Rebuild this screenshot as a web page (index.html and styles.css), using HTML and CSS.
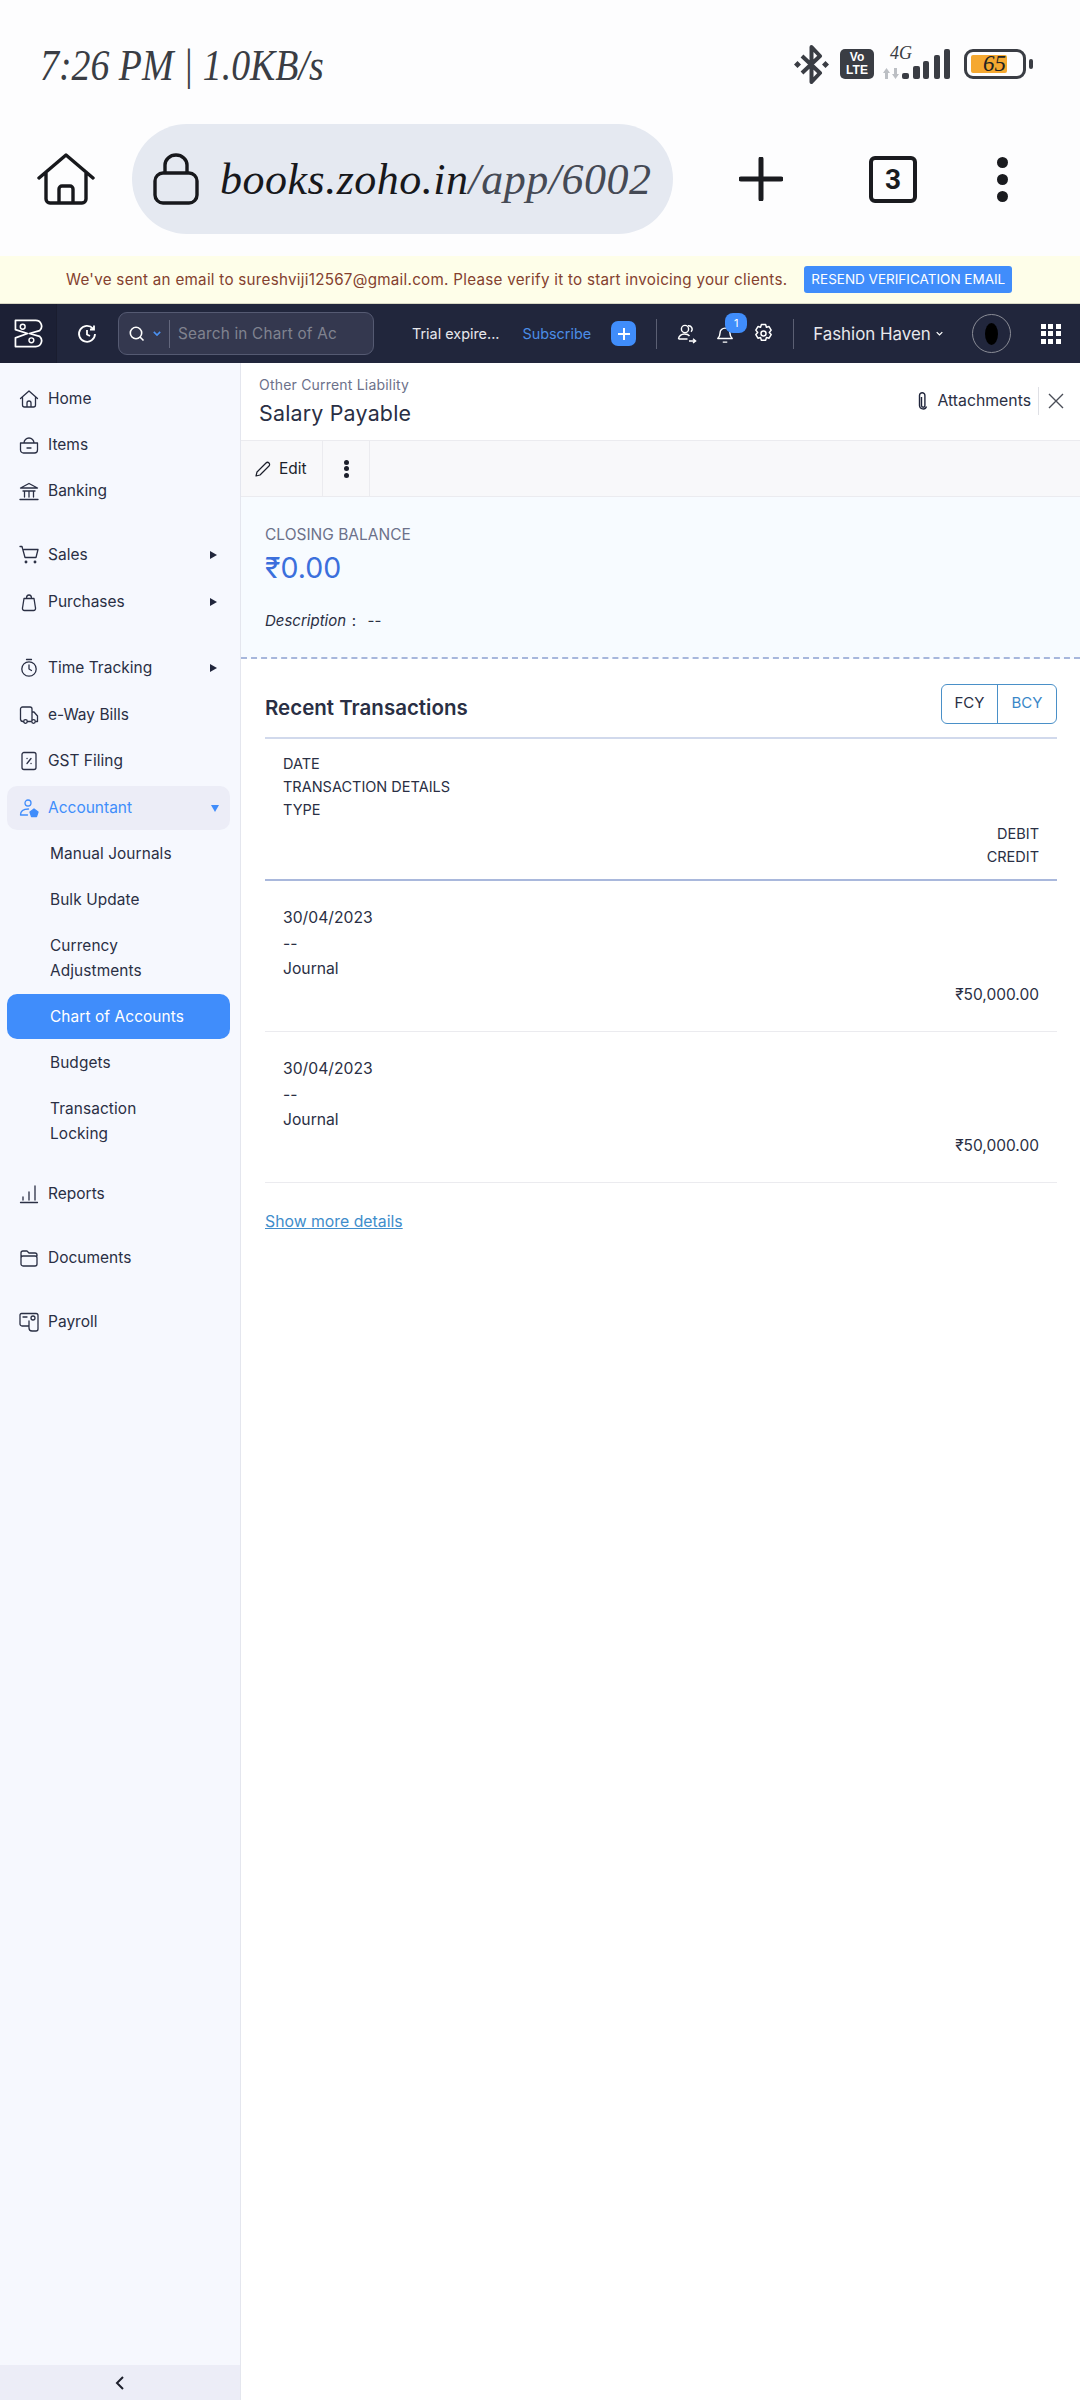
FILE: index.html
```html
<!DOCTYPE html>
<html lang="en">
<head>
<meta charset="utf-8">
<title>Salary Payable</title>
<link rel="stylesheet" href="styles.css">
</head>
<body>
<div class="phone">
  <div class="status">
    <span class="clock">7:26 PM | 1.0KB/s</span>
    <div class="status-icons">
      <svg class="bt" viewBox="0 0 35 39" width="35" height="39"><path d="M8 11l18 17-8.500 9V2L26 11 8 28" fill="none" stroke="#3a3d44" stroke-width="4" stroke-linejoin="round"/><path d="M3.500 16l3.500 3.500L3.500 23 0 19.500zM31.500 16l3.500 3.500-3.500 3.500-3.500-3.500z" fill="#3a3d44"/></svg>
      <span class="volte">Vo<br>LTE</span>
      <div class="signal">
        <span class="net">4G</span>
        <svg viewBox="0 0 67 32" width="67" height="32"><path d="M3.500 20l3.500 5H5v6H2v-6H0zM12.500 31l3.500-5h-2v-6h-3v6H9z" fill="#bcbfc4"/><g fill="#3a3d44"><rect x="19" y="25" width="7" height="6" rx="2"/><rect x="30" y="18" width="7" height="13" rx="2"/><rect x="40" y="13" width="6" height="18" rx="2"/><rect x="51" y="7" width="6" height="24" rx="2"/><rect x="61" y="1" width="6" height="30" rx="2"/></g></svg>
      </div>
      <div class="battery"><div class="batt-body"><i class="batt-fill"></i><span class="batt-num">65</span></div><i class="batt-tip"></i></div>
    </div>
  </div>
  <div class="browser">
    <svg class="home" viewBox="0 0 58 52" width="58" height="52"><path d="M2 25L29 2l27 23M9 19v27a4 4 0 0 0 4 4h32a4 4 0 0 0 4-4V19M22 50V36a3 3 0 0 1 3-3h8a3 3 0 0 1 3 3v14" fill="none" stroke="#17181c" stroke-width="3.400" stroke-linejoin="round" stroke-linecap="round"/></svg>
    <div class="urlbar">
      <svg viewBox="0 0 46 52" width="46" height="52"><path d="M12 20v-8a11 10 0 0 1 22 0v8" fill="none" stroke="#17181c" stroke-width="3.400"/><rect x="2" y="20" width="42" height="30" rx="8" fill="none" stroke="#17181c" stroke-width="3.400"/></svg>
      <span class="url"><b>books.zoho.in</b>/app/6002</span>
    </div>
    <svg class="plus" viewBox="0 0 44 44" width="44" height="44"><path d="M22 2v40M2 22h40" stroke="#1a1b1f" stroke-width="5" stroke-linecap="round"/></svg>
    <span class="tabs">3</span>
    <span class="dots"><i></i><i></i><i></i></span>
  </div>
  <div class="notice">
    <span class="notice-text">We've sent an email to sureshviji12567@gmail.com. Please verify it to start invoicing your clients.</span>
    <span class="resend">RESEND VERIFICATION EMAIL</span>
  </div>
  <header class="nav">
    <div class="logo"><svg viewBox="0 0 30 30" width="29" height="29"><path d="M1.500 1.500h21a6 6 0 0 1 4 10.500L16 15l10.500 3a6 6 0 0 1-4 10.500h-21v-9L14 15 1.500 11z" fill="none" stroke="#fff" stroke-width="1.800" stroke-linejoin="round"/><circle cx="9" cy="8" r="2.500" fill="none" stroke="#fff" stroke-width="1.500"/><circle cx="18" cy="22" r="2.500" fill="none" stroke="#fff" stroke-width="1.500"/></svg></div>
    <svg class="recent" viewBox="0 0 20 20" width="20" height="20"><path d="M16 4.500A8 8 0 1 0 18 10M17 1.500v4h-4M10 6v4.500l3 1.500" fill="none" stroke="#fff" stroke-width="1.800"/></svg>
    <div class="search">
      <svg viewBox="0 0 16 16" width="16" height="16"><circle cx="7" cy="7" r="5.700" fill="none" stroke="#fff" stroke-width="1.600"/><path d="M11 11l3.500 3.500" stroke="#fff" stroke-width="1.600"/></svg>
      <svg viewBox="0 0 10 6" width="8" height="5"><path d="M1 1l4 4 4-4" fill="none" stroke="#4a90f0" stroke-width="2"/></svg>
      <span class="search-sep"></span>
      <span class="search-text">Search in Chart of Ac</span>
    </div>
    <span class="trial">Trial expire...</span>
    <span class="subscribe">Subscribe</span>
    <span class="add"><svg viewBox="0 0 12 12" width="12" height="12"><path d="M6 0v12M0 6h12" stroke="#fff" stroke-width="2"/></svg></span>
    <span class="nav-sep"></span>
    <svg class="nav-i1" viewBox="0 0 20 20" width="20" height="20"><circle cx="8" cy="5" r="3.600" fill="none" stroke="#fff" stroke-width="1.400"/><path d="M11 1.800a3.500 3.500 0 0 1 3 6M1.500 15c0-3 3-5 6-5 2 0 4 .6 5 2M1.500 15h9M12 17h6.500M16 14.800l2.600 2.200-2.600 2" fill="none" stroke="#fff" stroke-width="1.400"/></svg>
    <div class="bell">
      <svg viewBox="0 0 20 22" width="18" height="20"><path d="M2 16c2-2 2.500-4 2.500-6a5.500 5.500 0 0 1 11 0c0 2 .5 4 2.500 6zM7.500 20h5" fill="none" stroke="#fff" stroke-width="1.600" stroke-linejoin="round"/></svg>
      <span class="badge">1</span>
    </div>
    <svg class="gear" viewBox="0 0 20 20" width="21" height="21"><path d="M8 1.500h4l.8 2.600 2.500-.7 2 3.400-1.800 2.200 1.800 2-2 3.500-2.500-.7-.8 2.700H8l-.8-2.700-2.500.7-2-3.500 1.800-2-1.800-2.200 2-3.400 2.500.7z" fill="none" stroke="#fff" stroke-width="1.400" stroke-linejoin="round"/><circle cx="10" cy="10" r="2.400" fill="none" stroke="#fff" stroke-width="1.400"/></svg>
    <span class="nav-sep sep-org"></span>
    <span class="org">Fashion Haven</span>
    <svg class="org-chev" viewBox="0 0 10 6" width="7" height="5"><path d="M1 1l4 4 4-4" fill="none" stroke="#fff" stroke-width="1.800"/></svg>
    <span class="avatar"><i></i></span>
    <span class="apps"><i></i><i></i><i></i><i></i><i></i><i></i><i></i><i></i><i></i></span>
  </header>
  <div class="main">
    <aside class="side">
      <nav class="menu">
        <a class="item"><svg viewBox="0 0 20 20"><path d="M1.500 9.500L10 2l8.500 7.500M3.500 8v8a2 2 0 0 0 2 2h9a2 2 0 0 0 2-2V8M8 18v-4a2 2 0 0 1 4 0v4"/></svg>Home</a>
        <a class="item"><svg viewBox="0 0 20 20"><path d="M1.500 8h17v7a3 3 0 0 1-3 3h-11a3 3 0 0 1-3-3zM5 8a5 5 0 0 1 10 0M8 13h4"/></svg>Items</a>
        <a class="item"><svg viewBox="0 0 20 20"><path d="M1.500 7L10 2.500 18.500 7zM1 18.500h18M4 10h12M5.500 10v6M10 10v6M14.500 10v6"/></svg>Banking</a>
        <a class="item gap-sales"><svg viewBox="0 0 20 20"><path d="M1 1.500h2l3 11h11l2-8H5"/><circle cx="7" cy="17" r=".8"/><circle cx="16" cy="17" r=".8"/></svg>Sales<i class="arrow"></i></a>
        <a class="item gap-next"><svg viewBox="0 0 20 20"><path d="M5 6.500h10l1.500 9.500a2 2 0 0 1-2 2.500h-9a2 2 0 0 1-2-2.500zM7.500 6.500a2.500 3.500 0 0 1 5 0"/></svg>Purchases<i class="arrow"></i></a>
        <a class="item gap-time"><svg viewBox="0 0 20 20"><circle cx="10" cy="11" r="7.200"/><path d="M7.500 1.500h5M10 7v4l2.500 1.500"/></svg>Time Tracking<i class="arrow"></i></a>
        <a class="item gap-next"><svg viewBox="0 0 20 20"><path d="M4.500 16.500H4a2.500 2.500 0 0 1-2.500-2V4a2 2 0 0 1 2-2H11a2 2 0 0 1 2 2v11M13 7h2l3.500 4v5.500h-1.500M8.500 16.500h3.500"/><circle cx="6.500" cy="16.500" r="1.800"/><circle cx="14.500" cy="16.500" r="1.800"/></svg>e-Way Bills</a>
        <a class="item"><svg viewBox="0 0 20 20"><rect x="3" y="1.500" width="14" height="17" rx="2"/><path d="M12 7.500L8 12.500M8 7.500h.1M12 12.500h.1"/></svg>GST Filing</a>
        <a class="item open"><svg viewBox="0 0 20 20"><circle cx="9" cy="5" r="3"/><path d="M1.500 17c0-4 3-6 8-6M1.500 17h7"/><path class="solid" d="M15 11l4 3-1.500 4.500h-5L11 14z"/></svg>Accountant<i class="arrow down"></i></a>
        <a class="sub">Manual Journals</a>
        <a class="sub">Bulk Update</a>
        <a class="sub">Currency<br>Adjustments</a>
        <a class="sub active">Chart of Accounts</a>
        <a class="sub">Budgets</a>
        <a class="sub">Transaction<br>Locking</a>
        <a class="item gap-reports"><svg viewBox="0 0 20 20"><path d="M1.500 18.500h17M4 13v3M10 8v8M16 2v14"/></svg>Reports</a>
        <a class="item gap-low"><svg viewBox="0 0 20 20"><path d="M2 16V5a2 2 0 0 1 2-2h4l2 2h6a2 2 0 0 1 2 2v1M2 10a2 2 0 0 1 2-2h12a2 2 0 0 1 2 2v6a2 2 0 0 1-2 2H4a2 2 0 0 1-2-2z"/></svg>Documents</a>
        <a class="item gap-low"><svg viewBox="0 0 20 20"><path d="M10 14H3a2 2 0 0 1-2-2V3a1.500 1.500 0 0 1 1.500-1.500H17a2 2 0 0 1 2 2V8M10 9v7a3 3 0 0 0 3 3h4a2 2 0 0 0 2-2V8M4 5h4"/><circle cx="14" cy="6" r="2"/></svg>Payroll</a>
      </nav>
      <div class="collapse"><svg viewBox="0 0 10 14" width="10" height="14"><path d="M8 1L2 7l6 6" fill="none" stroke="#1c1f2b" stroke-width="2"/></svg></div>
    </aside>
    <main class="content">
      <div class="head">
        <div>
          <div class="kicker">Other Current Liability</div>
          <div class="title">Salary Payable</div>
        </div>
        <div class="head-right">
          <svg viewBox="0 0 10 18" width="10" height="18"><path d="M3.500 5v8.500a1.700 1.700 0 0 0 3.400 0V3.500a2.700 2.700 0 0 0-5.400 0v10a3.600 3.600 0 0 0 7 1" fill="none" stroke="#21263c" stroke-width="1.400"/></svg>
          <span class="attach">Attachments</span>
          <span class="close"><svg viewBox="0 0 16 16" width="16" height="16"><path d="M1 1l14 14M15 1L1 15" stroke="#4a4d57" stroke-width="1.400"/></svg></span>
        </div>
      </div>
      <div class="toolbar">
        <div class="tool edit"><svg viewBox="0 0 16 16" width="16" height="16"><path d="M1 15l1-4L11 2a2 2 0 0 1 3 3L5 14z" fill="none" stroke="#1c1f2b" stroke-width="1.200" stroke-linejoin="round"/></svg>Edit</div>
        <div class="tool more"><span class="vdots"><i></i><i></i><i></i></span></div>
      </div>
      <section class="summary">
        <div class="cb-label">CLOSING BALANCE</div>
        <div class="cb-value">₹0.00</div>
        <div class="desc"><em>Description</em> :&nbsp; --</div>
      </section>
      <section class="recent-tx">
        <div class="tx-head">
          <h2>Recent Transactions</h2>
          <div class="toggle"><span class="fcy">FCY</span><span class="bcy">BCY</span></div>
        </div>
        <div class="table-head">
          <div>DATE</div><div>TRANSACTION DETAILS</div><div>TYPE</div>
          <div class="amount-head">DEBIT<br>CREDIT</div>
        </div>
        <div class="row">
          <div class="line">30/04/2023</div><div class="line">--</div><div class="line">Journal</div>
          <div class="amount">₹50,000.00</div>
        </div>
        <div class="row">
          <div class="line">30/04/2023</div><div class="line">--</div><div class="line">Journal</div>
          <div class="amount">₹50,000.00</div>
        </div>
        <a class="show-more">Show more details</a>
      </section>
    </main>
  </div>
</div>
</body>
</html>
```
FILE: styles.css
```css
* { box-sizing: border-box; }
html, body { margin: 0; padding: 0; }
body { width: 1080px; height: 2400px; overflow: hidden; background: #fff; font-family: Inter, "Liberation Sans", sans-serif; color: #2a2f44; }
.phone { width: 1080px; height: 2400px; display: flex; flex-direction: column; }

.status { height: 124px; padding: 36px 47px 0 40px; display: flex; justify-content: space-between; align-items: flex-start; background: #fdfdfe; }
.clock { font-family: "Liberation Serif", serif; font-style: italic; font-size: 44px; line-height: 60px; color: #3a3d44; transform: scaleX(.86); transform-origin: left center; white-space: nowrap; }
.status-icons { display: flex; align-items: center; height: 60px; margin-top: -2px; }
.volte { width: 34px; height: 30px; margin-left: 11px; border-radius: 5px; background: #3a3d44; color: #fff; font: 700 12px/13px "Liberation Sans", sans-serif; text-align: center; padding-top: 2px; }
.signal { position: relative; width: 67px; height: 32px; margin-left: 9px; }
.signal svg { display: block; }
.net { position: absolute; left: 7px; top: -5px; font: italic 18px/20px "Liberation Serif", serif; color: #3a3d44; }
.battery { display: flex; align-items: center; gap: 3px; margin-left: 14px; }
.batt-body { position: relative; width: 62px; height: 30px; border: 3px solid #3a3d44; border-radius: 9px; padding: 3px 4px; }
.batt-fill { display: block; width: 36px; height: 18px; background: #f5a830; border-radius: 2px; }
.batt-num { position: absolute; left: 16px; top: -1px; font: italic 23px/26px "Liberation Serif", serif; color: #222; }
.batt-tip { width: 4px; height: 10px; background: #3a3d44; border-radius: 2px; }

.browser { height: 132px; padding: 0 0 22px 37px; display: flex; align-items: center; background: #fdfdfe; }
.urlbar { width: 541px; height: 110px; margin-left: 37px; border-radius: 55px; background: #e5e9f1; display: flex; align-items: center; padding-left: 21px; gap: 21px; flex: none; }
.url { white-space: nowrap; font-family: "Liberation Serif", serif; font-style: italic; font-size: 44px; letter-spacing: .5px; color: #454a55; }
.url b { font-weight: 400; color: #17181c; }
.plus { margin-left: 66px; flex: none; }
.tabs { margin-left: 86px; width: 48px; height: 47px; border: 4px solid #1a1b1f; border-radius: 6px; display: flex; align-items: center; justify-content: center; font: 700 28px Roboto, "Liberation Sans", sans-serif; color: #1a1b1f; flex: none; }
.dots { margin-left: 80px; display: flex; flex-direction: column; gap: 6px; }
.dots i { width: 11px; height: 11px; border-radius: 50%; background: #1a1b1f; display: block; }

.notice { height: 48px; background: #fefee9; border-bottom: 1px solid #d9d8c4; display: flex; align-items: center; padding-left: 66px; font-size: 15.200px; white-space: nowrap; }
.notice-text { color: #84412f; letter-spacing: .27px; }
.resend { margin-left: 17px; background: #408dfb; color: #fff; border-radius: 3px; font-size: 13.500px; height: 27px; line-height: 27px; padding: 0 7px; }

.nav { height: 59px; background: #21263c; display: flex; align-items: center; color: #fff; white-space: nowrap; }
.nav > * { flex: none; }
.logo { width: 57px; height: 59px; background: #1c2035; border-right: 1px solid #1a1d2f; display: flex; align-items: center; justify-content: center; }
.recent { margin-left: 20px; }
.search { margin-left: 21px; width: 256px; height: 43px; background: #34384f; border: 1px solid #555a72; border-radius: 9px; display: flex; align-items: center; padding-left: 10px; gap: 8px; overflow: hidden; }
.search-sep { width: 1px; height: 28px; background: #63677d; }
.search-text { font-size: 15.300px; letter-spacing: .2px; color: #80838f; }
.trial { margin-left: 38px; font-size: 14.400px; color: #e7e8ec; }
.subscribe { margin-left: 23px; font-size: 14.400px; color: #4b8de6; }
.add { margin-left: 20px; width: 25px; height: 25px; border-radius: 7px; background: #408dfb; display: flex; align-items: center; justify-content: center; }
.nav-sep { width: 1px; height: 30px; background: #5b5f73; margin-left: 20px; }
.nav-i1 { margin-left: 20px; }
.bell { position: relative; margin-left: 19px; width: 18px; height: 20px; }
.bell svg { display: block; }
.badge { position: absolute; left: 9px; top: -11px; width: 22px; height: 20px; border-radius: 8px; background: #408dfb; font-size: 11px; line-height: 20px; text-align: center; }
.gear { margin-left: 19px; }
.nav-sep.sep-org { margin-left: 19px; }
.org { margin-left: 19px; font-size: 16.900px; color: #e7e8ec; }
.org-chev { margin-left: 5px; }
.avatar { margin-left: 29px; width: 39px; height: 39px; border-radius: 50%; border: 1px solid #8a8c96; background: #21263c; display: flex; align-items: center; justify-content: center; }
.avatar i { width: 13px; height: 22px; border-radius: 50%; background: #000; display: block; }
.apps { margin-left: 30px; display: grid; grid-template-columns: repeat(3, 5px); grid-auto-rows: 5px; gap: 2.500px; }
.apps i { background: #fff; display: block; }

.main { flex: 1; display: flex; min-height: 0; }
.side { width: 241px; flex: none; background: #f6f8fe; border-right: 1px solid #e4e6ee; display: flex; flex-direction: column; justify-content: space-between; }
.menu { padding: 16px 10px 0 7px; display: flex; flex-direction: column; }
.item { display: flex; align-items: center; height: 40px; padding-left: 12px; font-size: 15.500px; line-height: 20px; color: #2a2f44; position: relative; margin-top: 6px; }
.item:first-child { margin-top: 0; }
.item svg { width: 20px; height: 20px; margin-right: 9px; fill: none; stroke: #2a2f44; stroke-width: 1.300; stroke-linejoin: round; stroke-linecap: round; flex: none; }
.item.gap-sales { margin-top: 24px; }
.item.gap-next { margin-top: 7px; }
.item.gap-time { margin-top: 26px; }
.item.open { margin-top: 5px; height: 44px; }
.item.gap-reports { margin-top: 18px; }
.item.gap-low { margin-top: 24px; }
.arrow { position: absolute; right: 13px; top: 15.500px; border-left: 7px solid #21263c; border-top: 4.500px solid transparent; border-bottom: 4.500px solid transparent; }
.arrow.down { border-top: 7px solid #408dfb; border-bottom: 0; border-left: 4.500px solid transparent; border-right: 4.500px solid transparent; top: 19px; right: 11px; }
.open { background: #ecedf7; color: #408dfb; border-radius: 10px; }
.open svg { stroke: #408dfb; }
.open .solid { fill: #408dfb; }
.sub { display: block; padding: 10.500px 10px 10.500px 43px; font-size: 15.400px; line-height: 25px; letter-spacing: .1px; color: #2a2f44; border-radius: 10px; }
.sub.active { background: #408dfb; color: #fff; margin-top: 1px; padding: 10px 10px 10px 43px; }
.collapse { height: 35px; background: #ecedf7; display: flex; align-items: center; justify-content: center; }

.content { flex: 1; min-width: 0; display: flex; flex-direction: column; background: #fff; }
.head { height: 78px; padding: 12px 16px 0 18px; display: flex; justify-content: space-between; border-bottom: 1px solid #ebebef; }
.kicker { font-size: 14px; line-height: 20px; color: #6c718a; letter-spacing: .2px; }
.title { font-size: 21.400px; line-height: 26px; margin-top: 5px; color: #2a2f44; letter-spacing: .2px; }
.head-right { display: flex; align-items: center; height: 36px; margin-top: 8px; }
.attach { margin-left: 9px; font-size: 15.800px; color: #2a2f44; padding-right: 7px; border-right: 1px solid #dfe0e5; line-height: 28px; }
.close { margin-left: 9px; display: flex; }
.toolbar { height: 56px; background: #f8f8fa; border-bottom: 1px solid #ebebef; display: flex; }
.tool { display: flex; align-items: center; border-right: 1px solid #ebebef; }
.edit { width: 82px; padding-left: 14px; gap: 8px; font-size: 15.500px; color: #1c1f2b; }
.more { width: 47px; justify-content: center; }
.vdots { display: flex; flex-direction: column; gap: 1.500px; }
.vdots i { display: block; width: 5px; height: 5px; border-radius: 50%; background: #1c1f2b; }
.summary { height: 162px; background: #f7fbff; border-bottom: 2px dashed #a7b7dc; padding: 28px 0 0 24px; }
.cb-label { font-size: 15.500px; line-height: 20px; color: #6c718a; }
.cb-value { font-size: 28.500px; line-height: 38px; margin-top: 4px; color: #3b6fdc; }
.desc { margin-top: 22px; font-size: 15px; line-height: 24px; color: #2a2f44; word-spacing: 1.500px; }
.recent-tx { padding: 25px 23px 0 24px; }
.tx-head { display: flex; justify-content: space-between; align-items: flex-start; height: 40px; }
h2 { margin: 4px 0 0; font-size: 20.500px; line-height: 40px; font-weight: 600; color: #2a2f44; }
.toggle { display: flex; height: 40px; border: 1.500px solid #4a90c8; border-radius: 6px; font-size: 15px; overflow: hidden; }
.fcy { width: 56px; line-height: 36px; text-align: center; border-right: 1px solid #4a90c8; color: #2a2f44; }
.bcy { width: 58px; line-height: 36px; text-align: center; color: #3a87c8; }
.table-head { margin-top: 13px; height: 144px; border-top: 2px solid #d1d9ec; border-bottom: 2px solid #a9b8dc; padding: 13px 18px 0; font-size: 14.500px; line-height: 23px; color: #2a2f44; }
.amount-head { text-align: right; margin-top: 1px; }
.row { height: 151px; border-bottom: 1px solid #ebebef; padding: 24px 18px 0; font-size: 15.700px; line-height: 25.500px; color: #2a2f44; }
.amount { text-align: right; font-size: 15.500px; }
.show-more { display: block; margin-top: 29px; font-size: 15.800px; line-height: 20px; color: #408dcb; text-decoration: underline; }
```
